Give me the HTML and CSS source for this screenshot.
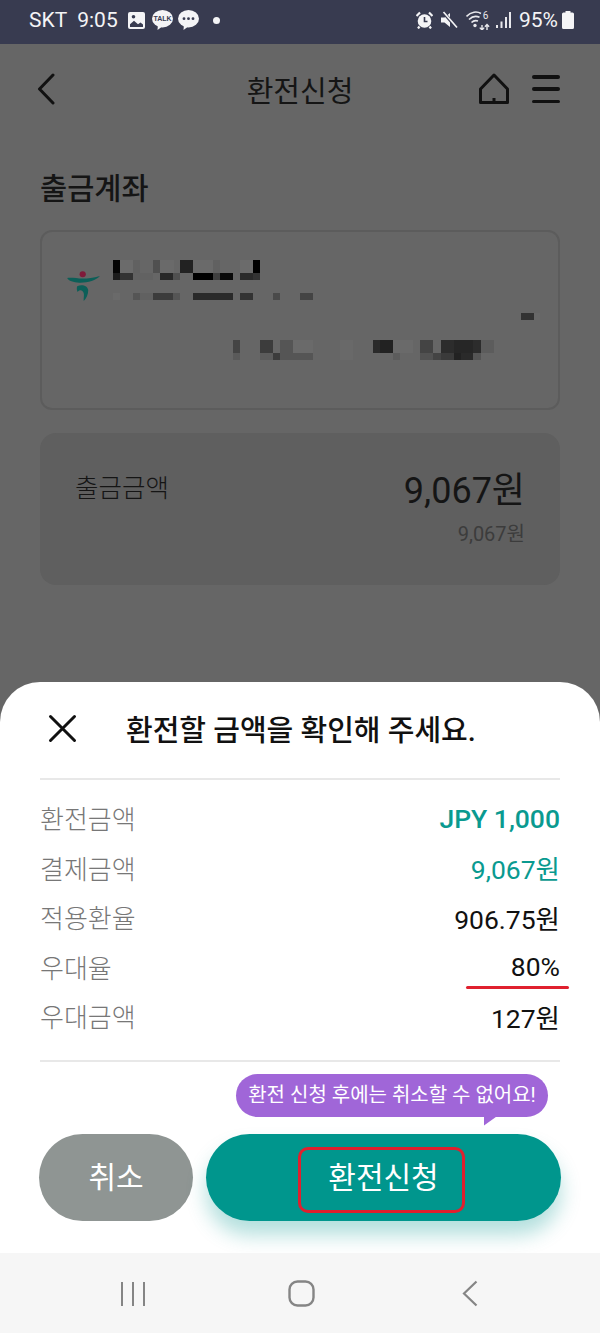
FILE: index.html
```html
<!DOCTYPE html>
<html lang="ko">
<head>
    <meta charset="UTF-8">
    <title>환전신청</title>
    <link rel="stylesheet" href="styles.css">
</head>
<body>
    <div class="phone">
        <div class="status-bar">
            <div class="status-left">
                <span class="carrier">SKT</span>
                <span class="clock">9:05</span>
                <svg class="ic-photo" width="17" height="17" viewBox="0 0 17 17">
                    <rect x="0" y="0" width="17" height="17" rx="2" fill="#f4f4f6"/>
                    <path d="M2 12.2 L6 8.8 L10 12.2 L12.5 10.4 L15 12.6 L15 15 L2 15 Z" fill="#383b50"/>
                    <circle cx="5.5" cy="4.8" r="1.8" fill="#383b50"/>
                </svg>
                <svg class="ic-talk" width="21" height="20" viewBox="0 0 21 20">
                    <ellipse cx="10.5" cy="8.7" rx="10.5" ry="8.7" fill="#f4f4f6"/>
                    <path d="M6 14 L5.5 20 L11 16 Z" fill="#f4f4f6"/>
                    <text x="10.5" y="11" class="talk-label">TALK</text>
                </svg>
                <svg class="ic-chat" width="21" height="20" viewBox="0 0 21 20">
                    <ellipse cx="10.5" cy="8.7" rx="10.5" ry="8.7" fill="#f4f4f6"/>
                    <path d="M6 14 L5.5 20 L11 16 Z" fill="#f4f4f6"/>
                    <circle cx="6" cy="8.7" r="1.4" fill="#383b50"/>
                    <circle cx="10.5" cy="8.7" r="1.4" fill="#383b50"/>
                    <circle cx="15" cy="8.7" r="1.4" fill="#383b50"/>
                </svg>
                <span class="status-dot"></span>
            </div>
            <div class="status-right">
                <svg class="ic-alarm" width="17" height="18" viewBox="0 0 17 18">
                    <circle cx="8.5" cy="10" r="6.8" fill="#f4f4f6"/>
                    <path d="M8.5 6 L8.5 10.5 L11.5 10.5" fill="none" stroke="#383b50" stroke-width="1.6"/>
                    <path d="M0.5 5 L4 1.5 M16.5 5 L13 1.5 M3.5 15.5 L2 17.5 M13.5 15.5 L15 17.5" stroke="#f4f4f6" stroke-width="2.2"/>
                </svg>
                <svg class="ic-mute" width="18" height="18" viewBox="0 0 18 18">
                    <path d="M1 6.5 L4.5 6.5 L10 2 L10 16 L4.5 11.5 L1 11.5 Z" fill="#f4f4f6"/>
                    <path d="M3 1 L17 17" stroke="#383b50" stroke-width="3.4"/>
                    <path d="M3.5 1 L17 16.5" stroke="#f4f4f6" stroke-width="1.7"/>
                </svg>
                <svg class="ic-wifi" width="24" height="20" viewBox="0 0 24 20">
                    <path d="M0.5 6.5 C5 1.5 11 1 15 3.5 M3 9.5 C6.5 6 10.5 5.8 13.5 7.3 M5.5 12.5 C7.5 10.5 10 10.3 12 11" fill="none" stroke="#e8e8ec" stroke-width="1.6"/>
                    <circle cx="9" cy="15.5" r="1.7" fill="#e8e8ec"/>
                    <path d="M16 15 L16 20 M13.8 17.6 L16 20 L18.2 17.6 M21 20 L21 14.5 M18.9 16.8 L21 14.5 L23.1 16.8" fill="none" stroke="#e8e8ec" stroke-width="1.4"/>
                    <text x="19.5" y="9" class="wifi-label">6</text>
                </svg>
                <svg class="ic-signal" width="15" height="18" viewBox="0 0 15 18">
                    <rect x="0" y="14" width="2" height="3" fill="#e8e8ec"/>
                    <rect x="4.5" y="10.5" width="2" height="6.5" fill="#e8e8ec"/>
                    <rect x="9" y="6" width="2" height="11" fill="#e8e8ec"/>
                    <rect x="13" y="1" width="2" height="16" fill="#e8e8ec"/>
                </svg>
                <span class="battery-pct">95%</span>
                <svg class="ic-battery" width="12" height="18" viewBox="0 0 12 18">
                    <path d="M3.5 0 L8.5 0 L8.5 1.5 L10.5 1.5 Q12 1.5 12 3 L12 16.5 Q12 18 10.5 18 L1.5 18 Q0 18 0 16.5 L0 3 Q0 1.5 1.5 1.5 L3.5 1.5 Z" fill="#f4f4f6"/>
                </svg>
            </div>
        </div>

        <div class="screen">
            <div class="app-header">
                <svg class="ic-back" width="18" height="32" viewBox="0 0 18 32">
                    <path d="M16 2 L2.5 16 L16 30" fill="none" stroke="#111" stroke-width="3" stroke-linecap="round" stroke-linejoin="round"/>
                </svg>
                <h1 class="app-title">환전신청</h1>
                <div class="header-actions">
                    <svg class="ic-home" width="32" height="32" viewBox="0 0 32 32">
                        <path d="M2.5 29.5 L2.5 16 L16 2 L29.5 16 L29.5 29.5 Z M16 25 L16 29.5" fill="none" stroke="#111" stroke-width="3" stroke-linejoin="round"/>
                    </svg>
                    <div class="ic-menu"><span></span><span></span><span></span></div>
                </div>
            </div>

            <div class="content">
                <h2 class="section-title">출금계좌</h2>
                <div class="account-card">
                    <!-- mosaic over the account details, coords from the reference crop -->
                    <svg class="account-mosaic" viewBox="35 21 1496 528" preserveAspectRatio="none">
                        <g shape-rendering="crispEdges">
                            <rect x="241" y="105" width="20" height="40" fill="#050505"/>
                            <rect x="261" y="105" width="38" height="40" fill="#6b6b6b"/>
                            <rect x="299" y="105" width="21" height="40" fill="#616161"/>
                            <rect x="357" y="105" width="20" height="40" fill="#505050"/>
                            <rect x="377" y="105" width="40" height="40" fill="#6a6a6a"/>
                            <rect x="436" y="105" width="37" height="40" fill="#222222"/>
                            <rect x="473" y="105" width="58" height="40" fill="#6a6a6a"/>
                            <rect x="531" y="105" width="19" height="40" fill="#616161"/>
                            <rect x="610" y="105" width="38" height="40" fill="#6b6b6b"/>
                            <rect x="648" y="105" width="20" height="40" fill="#000000"/>
                            <rect x="241" y="145" width="20" height="20" fill="#1c1c1c"/>
                            <rect x="261" y="145" width="38" height="20" fill="#333333"/>
                            <rect x="299" y="145" width="58" height="20" fill="#626262"/>
                            <rect x="377" y="145" width="38" height="20" fill="#282828"/>
                            <rect x="415" y="145" width="21" height="20" fill="#505050"/>
                            <rect x="473" y="145" width="58" height="20" fill="#000000"/>
                            <rect x="531" y="145" width="19" height="20" fill="#404040"/>
                            <rect x="550" y="145" width="39" height="20" fill="#0a0a0a"/>
                            <rect x="610" y="145" width="38" height="20" fill="#2a2a2a"/>
                            <rect x="648" y="145" width="20" height="20" fill="#333333"/>
                            <rect x="241" y="204" width="20" height="21" fill="#6a6a6a"/>
                            <rect x="299" y="204" width="21" height="21" fill="#555555"/>
                            <rect x="320" y="204" width="37" height="21" fill="#616161"/>
                            <rect x="357" y="204" width="58" height="21" fill="#3c3c3c"/>
                            <rect x="415" y="204" width="21" height="21" fill="#555555"/>
                            <rect x="473" y="204" width="116" height="21" fill="#2a2a2a"/>
                            <rect x="610" y="204" width="38" height="21" fill="#333333"/>
                            <rect x="706" y="204" width="20" height="21" fill="#4a4a4a"/>
                            <rect x="784" y="204" width="38" height="21" fill="#444444"/>
                            <rect x="1423" y="264" width="38" height="21" fill="#333333"/>
                            <rect x="1461" y="264" width="19" height="21" fill="#696969"/>
                            <rect x="589" y="345" width="21" height="40" fill="#444444"/>
                            <rect x="668" y="345" width="38" height="40" fill="#3c3c3c"/>
                            <rect x="726" y="345" width="38" height="40" fill="#555555"/>
                            <rect x="764" y="345" width="58" height="40" fill="#6a6a6a"/>
                            <rect x="900" y="345" width="38" height="40" fill="#696969"/>
                            <rect x="996" y="345" width="19" height="40" fill="#2a2a2a"/>
                            <rect x="1015" y="345" width="39" height="40" fill="#222222"/>
                            <rect x="1054" y="345" width="58" height="40" fill="#6a6a6a"/>
                            <rect x="1132" y="345" width="38" height="40" fill="#444444"/>
                            <rect x="1191" y="345" width="38" height="40" fill="#2c2c2c"/>
                            <rect x="1229" y="345" width="56" height="40" fill="#262626"/>
                            <rect x="1285" y="345" width="22" height="40" fill="#2c2c2c"/>
                            <rect x="1307" y="345" width="38" height="40" fill="#5c5c5c"/>
                            <rect x="589" y="385" width="21" height="20" fill="#5a5a5a"/>
                            <rect x="668" y="385" width="38" height="20" fill="#5c5c5c"/>
                            <rect x="706" y="385" width="20" height="20" fill="#3c3c3c"/>
                            <rect x="726" y="385" width="96" height="20" fill="#555555"/>
                            <rect x="900" y="385" width="38" height="20" fill="#696969"/>
                            <rect x="1054" y="385" width="19" height="20" fill="#5c5c5c"/>
                            <rect x="1132" y="385" width="38" height="20" fill="#525252"/>
                            <rect x="1170" y="385" width="21" height="20" fill="#444444"/>
                            <rect x="1191" y="385" width="38" height="20" fill="#3a3a3a"/>
                            <rect x="1229" y="385" width="21" height="20" fill="#222222"/>
                            <rect x="1250" y="385" width="35" height="20" fill="#2a2a2a"/>
                            <rect x="1285" y="385" width="22" height="20" fill="#555555"/>
                        </g>
                        <ellipse cx="153" cy="148" rx="9" ry="9" fill="#7f1a3a"/>
                        <path d="M108 159 C130 156 155 168 203 153 C192 166 165 174 143 173 C126 172 112 168 108 159 Z" fill="#0c5f58"/>
                        <path d="M137 184 C150 177 168 182 169 196 C169 210 163 221 156 228 C155 216 160 206 152 198 C148 194 142 196 138 201 C136 196 135 190 137 184 Z" fill="#0c5f58"/>
                    </svg>
                </div>
                <div class="amount-card">
                    <span class="amount-label">출금금액</span>
                    <div class="amount-values">
                        <div class="amount-main">9,067원</div>
                        <div class="amount-sub">9,067원</div>
                    </div>
                </div>
            </div>

            <div class="sheet">
                <div class="sheet-head">
                    <svg class="ic-close" width="29" height="29" viewBox="0 0 29 29">
                        <path d="M2.5 2.5 L26.5 26.5 M26.5 2.5 L2.5 26.5" stroke="#111" stroke-width="3" stroke-linecap="round"/>
                    </svg>
                    <h3 class="sheet-title">환전할 금액을 확인해 주세요.</h3>
                </div>
                <div class="info-list">
                    <div class="info-row">
                        <span class="info-label">환전금액</span>
                        <span class="info-value strong teal">JPY 1,000</span>
                    </div>
                    <div class="info-row">
                        <span class="info-label">결제금액</span>
                        <span class="info-value teal">9,067원</span>
                    </div>
                    <div class="info-row">
                        <span class="info-label">적용환율</span>
                        <span class="info-value">906.75원</span>
                    </div>
                    <div class="info-row">
                        <span class="info-label">우대율</span>
                        <span class="info-value">80%</span>
                        <span class="mark-line"></span>
                    </div>
                    <div class="info-row">
                        <span class="info-label">우대금액</span>
                        <span class="info-value">127원</span>
                    </div>
                </div>
                <div class="sheet-actions">
                    <div class="tooltip">환전 신청 후에는 취소할 수 없어요!</div>
                    <button class="btn btn-cancel">취소</button>
                    <button class="btn btn-apply">환전신청<span class="mark-box"></span></button>
                </div>
            </div>
        </div>

        <div class="nav-bar">
            <svg class="ic-recent" width="26" height="26" viewBox="0 0 26 26">
                <path d="M2 1 L2 25 M13 1 L13 25 M24 1 L24 25" stroke="#858585" stroke-width="2"/>
            </svg>
            <svg class="ic-circle" width="27" height="27" viewBox="0 0 27 27">
                <rect x="1.5" y="1.5" width="24" height="24" rx="8" fill="none" stroke="#858585" stroke-width="2.4"/>
            </svg>
            <svg class="ic-nav-back" width="16" height="27" viewBox="0 0 16 27">
                <path d="M14.5 1.5 L2 13.5 L14.5 25.5" fill="none" stroke="#858585" stroke-width="2.2"/>
            </svg>
        </div>
    </div>
</body>
</html>
```

FILE: styles.css
```css
* {
    box-sizing: border-box;
}
body {
    margin: 0;
    font-family: Roboto, "Noto Sans CJK KR", sans-serif;
    background-color: #666;
}
h1, h2, h3 {
    margin: 0;
    font-weight: 500;
}
svg {
    display: block;
    flex-shrink: 0;
}
.phone {
    width: 600px;
    height: 1333px;
    display: flex;
    flex-direction: column;
    overflow: hidden;
}

/* status bar */
.status-bar {
    height: 44px;
    padding: 0 26px 4px 29px;
    background-color: #383b50;
    color: #f4f4f6;
    font-size: 21px;
    display: flex;
    justify-content: space-between;
    align-items: center;
}
.status-left, .status-right {
    display: flex;
    align-items: center;
}
.clock {
    margin-left: 10px;
}
.ic-photo {
    margin-left: 10px;
}
.ic-talk {
    margin-left: 7px;
}
.ic-chat {
    margin-left: 5px;
}
.status-dot {
    width: 7px;
    height: 7px;
    margin-left: 14px;
    border-radius: 50%;
    background-color: #f4f4f6;
}
.talk-label {
    font-family: "Liberation Sans", sans-serif;
    font-size: 7px;
    font-weight: bold;
    text-anchor: middle;
    fill: #383b50;
}
.wifi-label {
    font-family: Roboto, sans-serif;
    font-size: 10px;
    text-anchor: middle;
    fill: #e8e8ec;
}
.ic-mute {
    margin-left: 7px;
}
.ic-wifi {
    margin-left: 8px;
}
.ic-signal {
    margin-left: 6px;
}
.battery-pct {
    margin-left: 8px;
}
.ic-battery {
    margin-left: 4px;
}

/* dimmed page behind the sheet */
.screen {
    flex: 1;
    position: relative;
    overflow: hidden;
}
.app-header {
    height: 90px;
    padding: 0 40px 0 37px;
    position: relative;
    display: flex;
    justify-content: space-between;
    align-items: center;
}
.app-title {
    position: absolute;
    left: 0;
    right: 0;
    text-align: center;
    font-size: 29px;
    font-weight: 400;
    color: #151515;
}
.header-actions {
    display: flex;
    align-items: center;
    gap: 22px;
}
.ic-menu {
    width: 28px;
    height: 28px;
    display: flex;
    flex-direction: column;
    justify-content: space-between;
}
.ic-menu span {
    height: 3.5px;
    border-radius: 2px;
    background-color: #111;
}
.content {
    padding: 35px 40px 0;
}
.section-title {
    font-size: 29.5px;
    line-height: 40px;
    color: #151515;
}
.account-card {
    height: 180px;
    margin-top: 21px;
    border: 2px solid #5c5c5c;
    border-radius: 12px;
}
.account-mosaic {
    width: 100%;
    height: 100%;
}
.amount-card {
    height: 152px;
    margin-top: 23px;
    padding: 36px 35px 0 35px;
    border-radius: 16px;
    background-color: #5f5f5f;
    display: flex;
    justify-content: space-between;
    align-items: flex-start;
}
.amount-label {
    font-size: 25.5px;
    font-weight: 300;
    line-height: 38px;
    color: #151515;
}
.amount-values {
    text-align: right;
}
.amount-main {
    font-size: 36px;
    line-height: 44px;
    color: #151515;
}
.amount-sub {
    margin-top: 6px;
    font-size: 20px;
    line-height: 30px;
    color: #3c3c3c;
}

/* bottom sheet */
.sheet {
    position: absolute;
    left: 0;
    right: 0;
    bottom: 0;
    height: 571px;
    padding: 0 40px;
    border-radius: 40px 40px 0 0;
    background-color: #fff;
}
.sheet-head {
    height: 98px;
    padding: 0 0 4px 8px;
    border-bottom: 2px solid #e8e8e8;
    display: flex;
    align-items: center;
}
.sheet-title {
    margin-left: 49px;
    font-size: 29px;
    color: #111;
}
.info-list {
    padding: 14px 0 18px;
    border-bottom: 2px solid #e8e8e8;
}
.info-row {
    height: 49.5px;
    position: relative;
    display: flex;
    justify-content: space-between;
    align-items: center;
}
.info-label {
    font-size: 26px;
    font-weight: 300;
    color: #777;
    padding-bottom: 2px;
}
.info-value {
    font-size: 26.5px;
    color: #111;
    padding-bottom: 1px;
}
.info-value.strong {
    font-weight: 500;
}
.info-value.teal {
    color: #0a9a90;
}
.mark-line {
    position: absolute;
    right: -9px;
    bottom: 3px;
    width: 103px;
    height: 3px;
    border-radius: 2px;
    background-color: #e0202e;
}
.sheet-actions {
    margin: 72px -1px 0;
    position: relative;
    display: flex;
    gap: 13px;
}
.tooltip {
    position: absolute;
    top: -60px;
    right: 13px;
    width: 312px;
    height: 43px;
    border-radius: 22px;
    background-color: #a066d8;
    color: #fff;
    font-size: 20px;
    line-height: 42px;
    text-align: center;
}
.tooltip::after {
    content: "";
    position: absolute;
    left: 248px;
    top: 42px;
    width: 14px;
    height: 10px;
    background-color: #a066d8;
    clip-path: polygon(0 0, 100% 0, 0 100%);
}
.btn {
    height: 87px;
    border: none;
    border-radius: 44px;
    color: #fff;
    font-family: inherit;
    font-size: 30px;
    padding: 0 0 4px;
}
.btn-cancel {
    width: 154px;
    background-color: #8f9593;
}
.btn-apply {
    flex: 1;
    position: relative;
    background-color: #00968d;
    box-shadow: 0 14px 20px rgba(0, 150, 141, 0.3);
}
.mark-box {
    position: absolute;
    left: 92px;
    top: 13px;
    width: 167px;
    height: 66px;
    border: 3px solid #e0202e;
    border-radius: 10px;
}

/* android nav */
.nav-bar {
    height: 80px;
    padding: 1px 0 0 120px;
    background-color: #f6f6f6;
    position: relative;
    z-index: 1;
    display: flex;
    align-items: center;
}
.ic-circle {
    margin-left: 142px;
}
.ic-nav-back {
    margin-left: 147px;
}
```
